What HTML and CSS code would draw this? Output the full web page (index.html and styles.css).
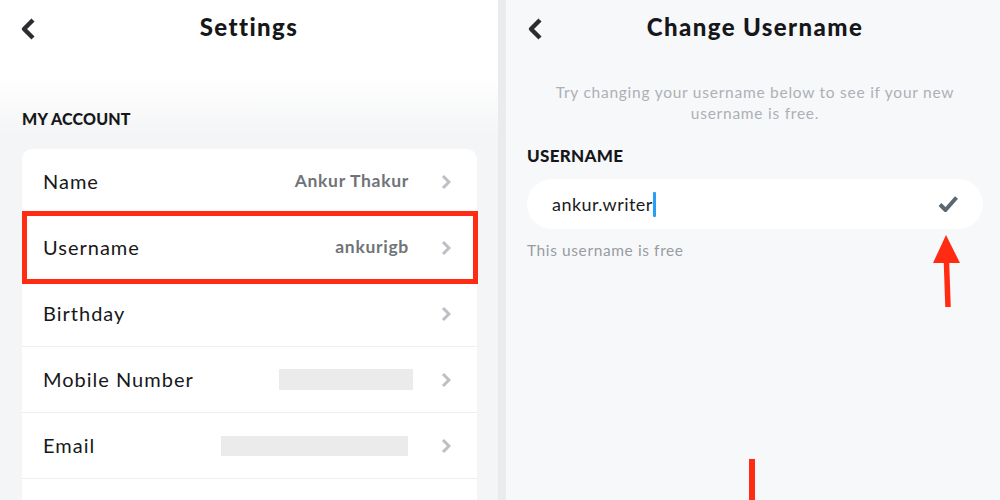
FILE: index.html
```html
<!DOCTYPE html>
<html lang="en">
<head>
<meta charset="utf-8">
<title>Settings – Change Username</title>
<link rel="stylesheet" href="styles.css">
</head>
<body>
<div class="screens">
  <section class="panel settings">
    <header class="topbar">
      <svg class="back" width="16" height="24" viewBox="0 0 16 24"><path d="M13 3 L4 12 L13 21" fill="none" stroke="#2b2d31" stroke-width="4.4" stroke-linejoin="round"/></svg>
      <h1 class="title">Settings</h1>
      <span></span>
    </header>
    <h2 class="section-label">MY ACCOUNT</h2>
    <div class="card">
      <div class="row">
        <span class="row-label">Name</span>
        <span class="row-value">Ankur Thakur</span>
        <svg class="chev" width="10" height="16" viewBox="0 0 10 16"><path d="M2 2 L8 8 L2 14" fill="none" stroke="#bcbfc3" stroke-width="3"/></svg>
      </div>
      <div class="row row-highlight">
        <span class="row-label">Username</span>
        <span class="row-value">ankurigb</span>
        <svg class="chev" width="10" height="16" viewBox="0 0 10 16"><path d="M2 2 L8 8 L2 14" fill="none" stroke="#bcbfc3" stroke-width="3"/></svg>
        <span class="highlight-box"></span>
      </div>
      <div class="row">
        <span class="row-label">Birthday</span>
        <span class="row-value"></span>
        <svg class="chev" width="10" height="16" viewBox="0 0 10 16"><path d="M2 2 L8 8 L2 14" fill="none" stroke="#bcbfc3" stroke-width="3"/></svg>
      </div>
      <div class="row">
        <span class="row-label">Mobile Number</span>
        <span class="mask mask-phone"></span>
        <svg class="chev" width="10" height="16" viewBox="0 0 10 16"><path d="M2 2 L8 8 L2 14" fill="none" stroke="#bcbfc3" stroke-width="3"/></svg>
      </div>
      <div class="row">
        <span class="row-label">Email</span>
        <span class="mask mask-email"></span>
        <svg class="chev" width="10" height="16" viewBox="0 0 10 16"><path d="M2 2 L8 8 L2 14" fill="none" stroke="#bcbfc3" stroke-width="3"/></svg>
      </div>
      <div class="row row-empty"></div>
    </div>
  </section>

  <div class="divider"></div>

  <section class="panel change">
    <header class="topbar">
      <svg class="back" width="16" height="24" viewBox="0 0 16 24"><path d="M13 3 L4 12 L13 21" fill="none" stroke="#2b2d31" stroke-width="4.4" stroke-linejoin="round"/></svg>
      <h1 class="title">Change Username</h1>
      <span></span>
    </header>
    <p class="desc">Try changing your username below to see if your new username is free.</p>
    <h2 class="field-label">USERNAME</h2>
    <div class="input">
      <span class="input-text">ankur.writer</span><span class="caret"></span>
      <svg class="check" width="22" height="20" viewBox="0 0 22 20"><path d="M3 10.5 L8.5 16 L19.5 3.5" fill="none" stroke="#5c6770" stroke-width="4" stroke-linejoin="round"/></svg>
    </div>
    <p class="hint">This username is free</p>

    <svg class="arrow arrow-up" width="40" height="80" viewBox="0 0 40 80"><path d="M19.5 28 L21 72" stroke="#ff2b12" stroke-width="5.5" fill="none"/><path d="M19 0 L33 28 L6 28 Z" fill="#ff2b12"/></svg>
    <svg class="arrow arrow-line" width="8" height="42" viewBox="0 0 8 42"><rect x="1" y="0" width="6" height="42" fill="#ff2b12"/></svg>
  </section>
</div>
</body>
</html>
```

FILE: styles.css
```css
* { box-sizing: border-box; }

html, body {
  margin: 0;
  padding: 0;
  width: 1000px;
  height: 500px;
  overflow: hidden;
  font-family: "Lato", "Open Sans", sans-serif;
  color: #17181a;
}

.screens {
  display: flex;
  width: 1000px;
  height: 500px;
}

.panel {
  position: relative;
  height: 500px;
  overflow: hidden;
}

.settings {
  width: 498px;
  flex: none;
  background: linear-gradient(#ffffff 0, #ffffff 75px, #f4f5f6 135px, #f4f5f6 100%);
}

.divider {
  width: 8px;
  flex: none;
  background: #eaebed;
}

.change {
  flex: 1;
  background: #f7f8fa;
  padding: 0 17px 0 21px;
}

.topbar {
  height: 54px;
  display: grid;
  grid-template-columns: 1fr auto 1fr;
  align-items: center;
}

.settings .topbar {
  padding: 0 20px 0 20px;
}

.back {
  display: block;
  margin-top: 4px;
}

.title {
  margin: 0;
  font-size: 24px;
  line-height: 28px;
  font-weight: 900;
  color: #16171a;
  letter-spacing: 1.4px;
}

.section-label {
  margin: 55px 0 0 22px;
  font-size: 16px;
  line-height: 20px;
  font-weight: 900;
  color: #16171a;
  letter-spacing: 0.2px;
}

.card {
  margin: 20px 0 0 22px;
  width: 455px;
  background: #ffffff;
  border-radius: 10px;
}

.row {
  position: relative;
  height: 66px;
  display: flex;
  align-items: center;
  padding: 0 26px 0 21px;
  border-bottom: 1px solid #eeeeef;
}

.row-label {
  font-size: 20px;
  letter-spacing: 1px;
  color: #17181a;
  margin-top: -2px;
}

.row-value {
  margin-left: auto;
  margin-right: 32px;
  font-size: 17.5px;
  letter-spacing: 0.7px;
  font-weight: 700;
  color: #6f7479;
  margin-top: -2px;
}

.chev {
  display: block;
  flex: none;
}

.mask {
  margin-left: auto;
  background: #ebebeb;
  height: 21px;
}

.mask-phone {
  width: 134px;
  margin-right: 28px;
}

.mask-email {
  width: 187px;
  height: 20px;
  margin-right: 33px;
}

.row-empty {
  border-bottom: none;
}

.highlight-box {
  position: absolute;
  left: 0;
  right: -1px;
  top: -4px;
  bottom: -4px;
  border: 5px solid #ff2b12;
}

.desc {
  margin: 28px auto 0;
  max-width: 410px;
  text-align: center;
  font-size: 15.5px;
  line-height: 21px;
  letter-spacing: 0.75px;
  color: #adb0b5;
}

.field-label {
  margin: 22px 0 0 0;
  font-size: 17px;
  line-height: 20px;
  font-weight: 900;
  letter-spacing: 0.3px;
  color: #16171a;
}

.input {
  margin-top: 13px;
  height: 50px;
  background: #ffffff;
  border-radius: 25px;
  display: flex;
  align-items: center;
  padding: 0 24px 0 25px;
}

.input-text {
  font-size: 18px;
  letter-spacing: 0.45px;
  color: #1a1b1d;
}

.caret {
  display: inline-block;
  width: 3px;
  height: 25px;
  background: #2a9df4;
  border-radius: 1px;
}

.check {
  margin-left: auto;
  display: block;
}

.hint {
  margin: 11px 0 0 0;
  font-size: 15.5px;
  line-height: 20px;
  letter-spacing: 0.6px;
  color: #999ca1;
}

.arrow {
  position: absolute;
  display: block;
}

.arrow-up {
  left: 421px;
  top: 235px;
}

.arrow-line {
  left: 242px;
  top: 459px;
}
```
